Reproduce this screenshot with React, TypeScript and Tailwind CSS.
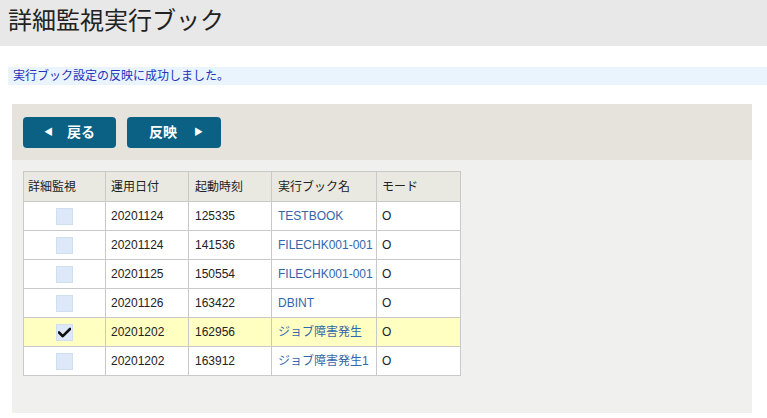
import React from 'react';

const rows = [
  { checked: false, date: '20201124', time: '125335', name: 'TESTBOOK', mode: 'O' },
  { checked: false, date: '20201124', time: '141536', name: 'FILECHK001-001', mode: 'O' },
  { checked: false, date: '20201125', time: '150554', name: 'FILECHK001-001', mode: 'O' },
  { checked: false, date: '20201126', time: '163422', name: 'DBINT', mode: 'O' },
  { checked: true, date: '20201202', time: '162956', name: 'ジョブ障害発生', mode: 'O' },
  { checked: false, date: '20201202', time: '163912', name: 'ジョブ障害発生1', mode: 'O' },
];

const font = { fontFamily: '"Liberation Sans", "Noto Sans CJK JP", sans-serif' };

export default function App() {
  return (
    <div className="w-[767px] h-[418px] bg-white overflow-hidden text-[#222]" style={font}>
      {/* Title */}
      <div className="h-[46px] bg-[#e8e8e8] pl-[8px] pt-[4px]">
        <h1 className="text-[24px] leading-[34px] text-[#222] font-normal">詳細監視実行ブック</h1>
      </div>

      {/* Message */}
      <div className="mt-[21px] ml-[8px] h-[18px] bg-[#eaf4fd] pl-[5px] text-[12px] leading-[18px] text-[#2233bb]">
        実行ブック設定の反映に成功しました。
      </div>

      {/* Panel */}
      <div className="mt-[19px] ml-[12px] w-[740px]">
        <div className="h-[56px] bg-[#e6e3dd] flex items-center gap-[11px] pl-[11px] pt-[1px]">
          <button className="w-[93px] h-[31px] rounded-[4px] bg-[#0a6184] text-white text-[14px] font-bold flex items-center justify-center gap-[14px]">
            <span className="text-[9px]">◀</span>
            <span>戻る</span>
          </button>
          <button className="w-[94px] h-[31px] rounded-[4px] bg-[#0a6184] text-white text-[14px] font-bold flex items-center justify-center gap-[17px] pl-[4px]">
            <span>反映</span>
            <span className="text-[9px]">▶</span>
          </button>
        </div>

        <div className="h-[253px] bg-[#f0f0ee] pt-[11px] pl-[11px]">
          <table className="border-collapse bg-white text-[12px] text-[#222]">
            <thead>
              <tr className="h-[30px] bg-[#e9e9e1]">
                <th className="w-[82px] border border-[#c9c9c9] text-left font-normal pl-[4px]">詳細監視</th>
                <th className="w-[83px] border border-[#c9c9c9] text-left font-normal pl-[5px]">運用日付</th>
                <th className="w-[83px] border border-[#c9c9c9] text-left font-normal pl-[6px]">起動時刻</th>
                <th className="w-[105px] border border-[#c9c9c9] text-left font-normal pl-[6px]">実行ブック名</th>
                <th className="w-[84px] border border-[#c9c9c9] text-left font-normal pl-[5px]">モード</th>
              </tr>
            </thead>
            <tbody>
              {rows.map((r, i) => (
                <tr key={i} className={`h-[29px] ${r.checked ? 'bg-[#ffffc2]' : 'bg-white'}`}>
                  <td className="border border-[#c9c9c9]">
                    <div className="mx-auto w-[17px] h-[17px] bg-[#dde9f8] border border-[#cfdff2] flex items-center justify-center">
                      {r.checked && (
                        <svg width="13" height="11" viewBox="0 0 13 11">
                          <path d="M1 5.5 L4.8 9.2 L12 2" fill="none" stroke="#111" strokeWidth="2.6" strokeLinecap="round" strokeLinejoin="round" />
                        </svg>
                      )}
                    </div>
                  </td>
                  <td className="border border-[#c9c9c9] pl-[5px]">{r.date}</td>
                  <td className="border border-[#c9c9c9] pl-[6px]">{r.time}</td>
                  <td className="border border-[#c9c9c9] pl-[6px] text-[#3366aa] whitespace-nowrap">{r.name}</td>
                  <td className="border border-[#c9c9c9] pl-[5px]">{r.mode}</td>
                </tr>
              ))}
            </tbody>
          </table>
        </div>
      </div>
    </div>
  );
}
